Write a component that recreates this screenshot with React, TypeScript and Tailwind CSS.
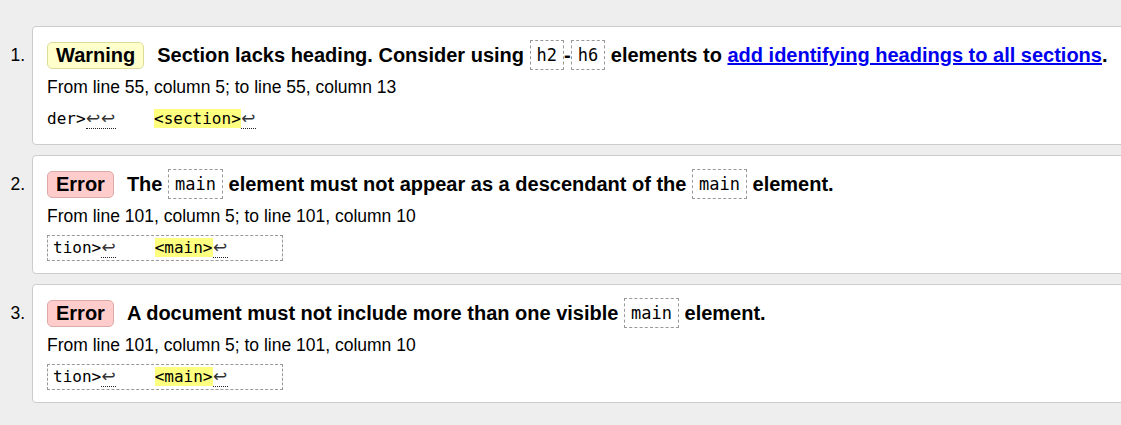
import React from "react";

// one validator message, as shown in the results list
interface Message {
  kind: "Warning" | "Error";
  heading: React.ReactNode;
  location: string;
  extract: React.ReactNode;
  boxed: boolean;
}

const Code = ({ children }: { children: React.ReactNode }) => (
  <code className="inline-block align-top border border-dashed border-[#999] px-[6px] leading-[28px] text-[17px] font-['DejaVu_Sans_Mono',monospace] font-normal">
    {children}
  </code>
);

// the little return arrows with a dotted line beneath
const Ret = ({ n = 1 }: { n?: number }) => (
  <span className="inline-block border-b border-dotted border-[#222] leading-[18px]">
    {Array.from({ length: n }).map((_, i) => (
      <span key={i} className="inline-block w-[15px] text-center text-[#333] font-['DejaVu_Sans',sans-serif] text-[17px]">
        ↩
      </span>
    ))}
  </span>
);

const Mark = ({ children }: { children: React.ReactNode }) => (
  <span className="bg-[#ffff80]">{children}</span>
);

const messages: Message[] = [
  {
    kind: "Warning",
    heading: (
      <>
        Section lacks heading. Consider using <Code>h2</Code>-<Code>h6</Code> elements to{" "}
        <a href="#" className="text-[#0000ee] underline">
          add identifying headings to all sections
        </a>
        .
      </>
    ),
    location: "From line 55, column 5; to line 55, column 13",
    extract: (
      <>
        der&gt;<Ret n={2} />
        {"    "}
        <Mark>&lt;section&gt;</Mark>
        <Ret />
      </>
    ),
    boxed: false,
  },
  {
    kind: "Error",
    heading: (
      <>
        The <Code>main</Code> element must not appear as a descendant of the <Code>main</Code> element.
      </>
    ),
    location: "From line 101, column 5; to line 101, column 10",
    extract: (
      <>
        tion&gt;<Ret />
        {"    "}
        <Mark>&lt;main&gt;</Mark>
        <Ret />
      </>
    ),
    boxed: true,
  },
  {
    kind: "Error",
    heading: (
      <>
        A document must not include more than one visible <Code>main</Code> element.
      </>
    ),
    location: "From line 101, column 5; to line 101, column 10",
    extract: (
      <>
        tion&gt;<Ret />
        {"    "}
        <Mark>&lt;main&gt;</Mark>
        <Ret />
      </>
    ),
    boxed: true,
  },
];

const App: React.FC = () => {
  return (
    <div className="w-full h-[425px] overflow-hidden bg-[#eeeeee] font-['Liberation_Sans',Arial,sans-serif] text-black">
      <ol className="flex flex-col gap-[10px] pt-[26px]">
        {messages.map((m, index) => (
          <li key={index} className="flex">
            {/* list number */}
            <div className="w-[32px] shrink-0 pr-[7px] pt-[14px] text-right text-[17.5px] leading-[30px]">{index + 1}.</div>

            <div className="w-[1120px] shrink-0 bg-white border border-[#cccccc] rounded-[4px] pl-[14px] pt-[13px] pb-[12px]">
              {/* heading */}
              <div className="flex items-center h-[30px]">
                <strong
                  className={`inline-block shrink-0 border rounded-[5px] px-[8px] leading-[25px] text-[20px] font-bold ${
                    m.kind === "Warning" ? "bg-[#ffffcc] border-[#dddd99]" : "bg-[#ffcccc] border-[#ddaaaa]"
                  }`}
                >
                  {m.kind}
                </strong>
                <span className="ml-[13px] text-[20px] font-bold leading-[30px] whitespace-nowrap">{m.heading}</span>
              </div>

              {/* location */}
              <p className="mt-[7px] text-[17.5px] leading-[20px]">{m.location}</p>

              {/* extract */}
              <p className="mt-[9px] h-[26px]">
                <code
                  className={`inline-block h-[26px] border border-dashed leading-[24px] text-[16px] whitespace-pre font-['DejaVu_Sans_Mono',monospace] ${
                    m.boxed ? "w-[236px] pl-[5px] border-[#999]" : "pl-0 border-transparent -ml-[1px]"
                  }`}
                >
                  {m.extract}
                </code>
              </p>
            </div>
          </li>
        ))}
      </ol>
    </div>
  );
};

export default App;
